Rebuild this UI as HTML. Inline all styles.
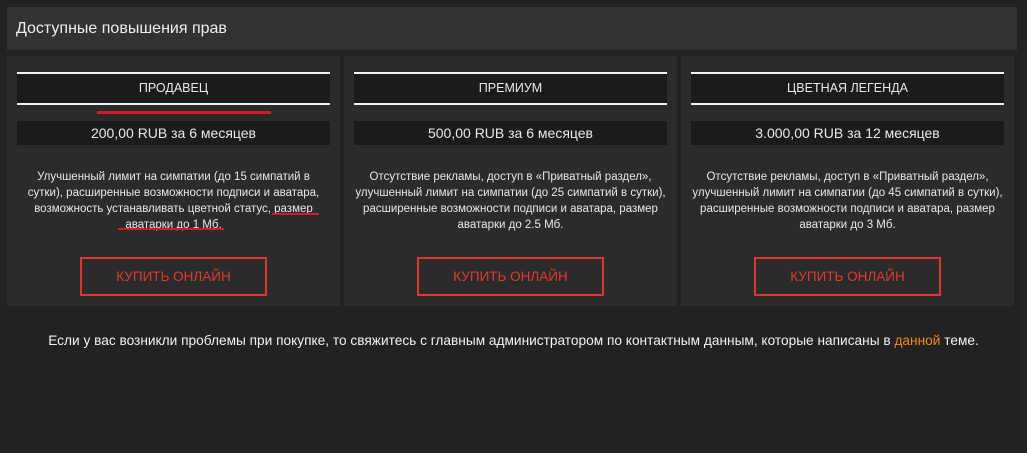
<!DOCTYPE html>
<html><head><meta charset="utf-8"><style>
body{margin:0;background:#222;width:1027px;height:453px;overflow:hidden;font-family:"Liberation Sans","DejaVu Sans",sans-serif;color:#e8e8e8;position:relative}
.hdr{position:absolute;left:7px;top:7px;width:1010px;height:43px;background:#323232;font-size:16px;line-height:43px;text-indent:9px;color:#eee}
.card{position:absolute;top:56px;height:250px;width:333px;background:#2b2b2b}
.t{position:absolute;left:10px;right:10px;top:16px;height:29px;border-top:2px solid #f2f2f2;border-bottom:2px solid #f2f2f2;background:#1b1b1b;text-align:center;line-height:29px;font-size:12.5px}
.p{position:absolute;left:10px;right:10px;top:65px;height:24px;background:#1b1b1b;text-align:center;line-height:24px;font-size:14px}
.d{position:absolute;left:10px;right:10px;top:113px;text-align:center;font-size:11.5px;line-height:16px}
.b{position:absolute;left:73px;top:201px;width:183px;height:35px;border:2px solid #d9382f;text-align:center;line-height:35px;color:#e03a2e;font-size:13.5px}
.foot{position:absolute;top:333px;left:0;width:1027px;text-align:center;font-size:13.7px;color:#f2f2f2;white-space:nowrap}
.r{position:absolute;background:#d01c22;height:3px}
</style></head><body>
<div class="hdr">Доступные повышения прав</div>
<div class="card" style="left:7px">
<div class="t">ПРОДАВЕЦ</div><div class="p">200,00 RUB за 6 месяцев</div>
<div class="d" style="white-space:nowrap">Улучшенный лимит на симпатии (до 15 симпатий в<br>сутки), расширенные возможности подписи и аватара,<br>возможность устанавливать цветной статус, размер<br>аватарки до 1 Мб.</div>
<div class="b">КУПИТЬ ОНЛАЙН</div></div>
<div class="card" style="left:344px">
<div class="t">ПРЕМИУМ</div><div class="p">500,00 RUB за 6 месяцев</div>
<div class="d">Отсутствие рекламы, доступ в «Приватный раздел», улучшенный лимит на симпатии (до 25 симпатий в сутки), расширенные возможности подписи и аватара, размер аватарки до 2.5 Мб.</div>
<div class="b">КУПИТЬ ОНЛАЙН</div></div>
<div class="card" style="left:681px">
<div class="t">ЦВЕТНАЯ ЛЕГЕНДА</div><div class="p">3.000,00 RUB за 12 месяцев</div>
<div class="d">Отсутствие рекламы, доступ в «Приватный раздел», улучшенный лимит на симпатии (до 45 симпатий в сутки), расширенные возможности подписи и аватара, размер аватарки до 3 Мб.</div>
<div class="b">КУПИТЬ ОНЛАЙН</div></div>
<div class="r" style="left:97px;top:111px;width:174px"></div>
<div class="r" style="left:272px;top:213px;width:47px;height:2px"></div>
<div class="r" style="left:118px;top:228px;width:106px;height:2px"></div>
<div class="foot">Если у вас возникли проблемы при покупке, то свяжитесь с главным администратором по контактным данным, которые написаны в <span style="color:#f08a1c">данной</span> теме.</div>
</body></html>
